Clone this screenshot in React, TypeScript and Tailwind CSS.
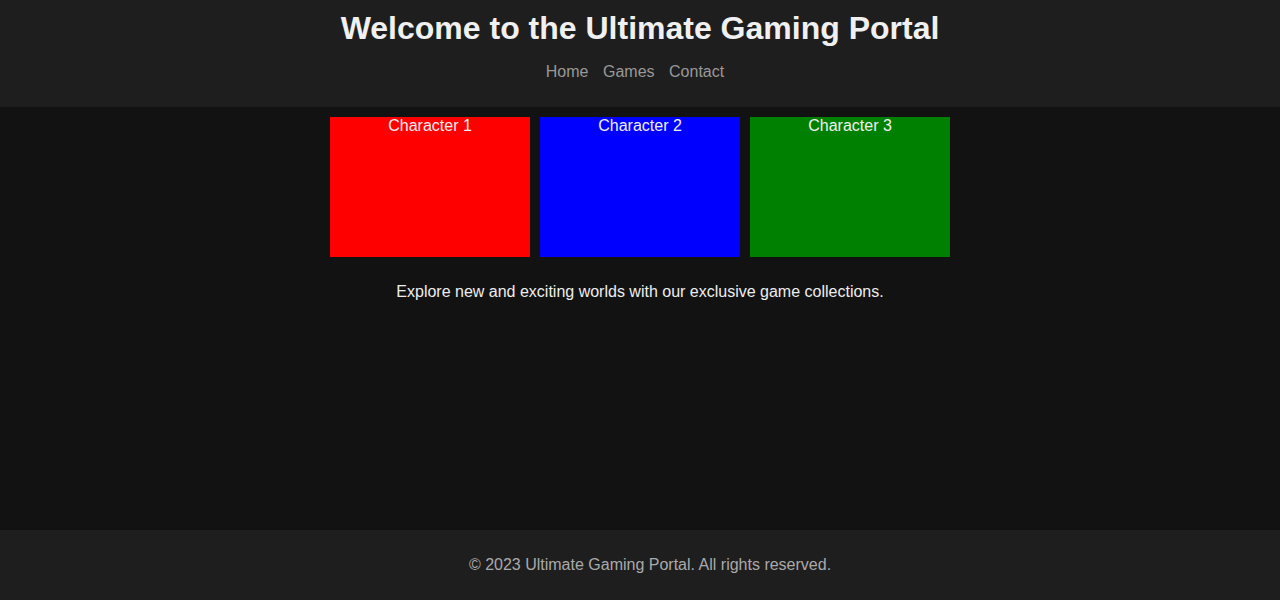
import React from 'react';

const characters = [
  { id: 1, name: 'Character 1', color: 'bg-[#ff0000]' },
  { id: 2, name: 'Character 2', color: 'bg-[#0000ff]' },
  { id: 3, name: 'Character 3', color: 'bg-[#008000]' },
];

const App: React.FC = () => {
  return (
    <div className="min-h-screen flex flex-col bg-[#121212] text-[#e0e0e0] font-['Liberation_Sans',Arial,sans-serif]">
      {/* Header */}
      <header className="bg-[#1e1e1e] p-[10px] text-center">
        <h1 className="text-[32px] leading-[37px] font-bold text-[#f0f0f0]">
          Welcome to the Ultimate Gaming Portal
        </h1>
        <nav className="my-4 pr-[10px] flex justify-center gap-[14.5px] text-base leading-[18px]">
          <a href="#" className="text-[#999999]">Home</a>
          <a href="#" className="text-[#999999]">Games</a>
          <a href="#" className="text-[#999999]">Contact</a>
        </nav>
      </header>

      {/* Main */}
      <main className="flex-1 pt-[10px] text-center">
        <div className="flex justify-center gap-[10px]">
          {characters.map((c) => (
            <div key={c.id} className={`w-[200px] h-[140px] ${c.color} text-[#f0f0f0] text-base leading-[18.5px]`}>
              {c.name}
            </div>
          ))}
        </div>
        <p className="mt-[26px] text-base leading-[18.5px] text-[#eeeeee]">
          Explore new and exciting worlds with our exclusive game collections.
        </p>
      </main>

      {/* Footer */}
      <footer className="bg-[#1e1e1e] h-[70px] pl-[20px] flex items-center justify-center">
        <p className="text-base leading-[18.5px] text-[#aaaaaa]">
          © 2023 Ultimate Gaming Portal. All rights reserved.
        </p>
      </footer>
    </div>
  );
};

export default App;
